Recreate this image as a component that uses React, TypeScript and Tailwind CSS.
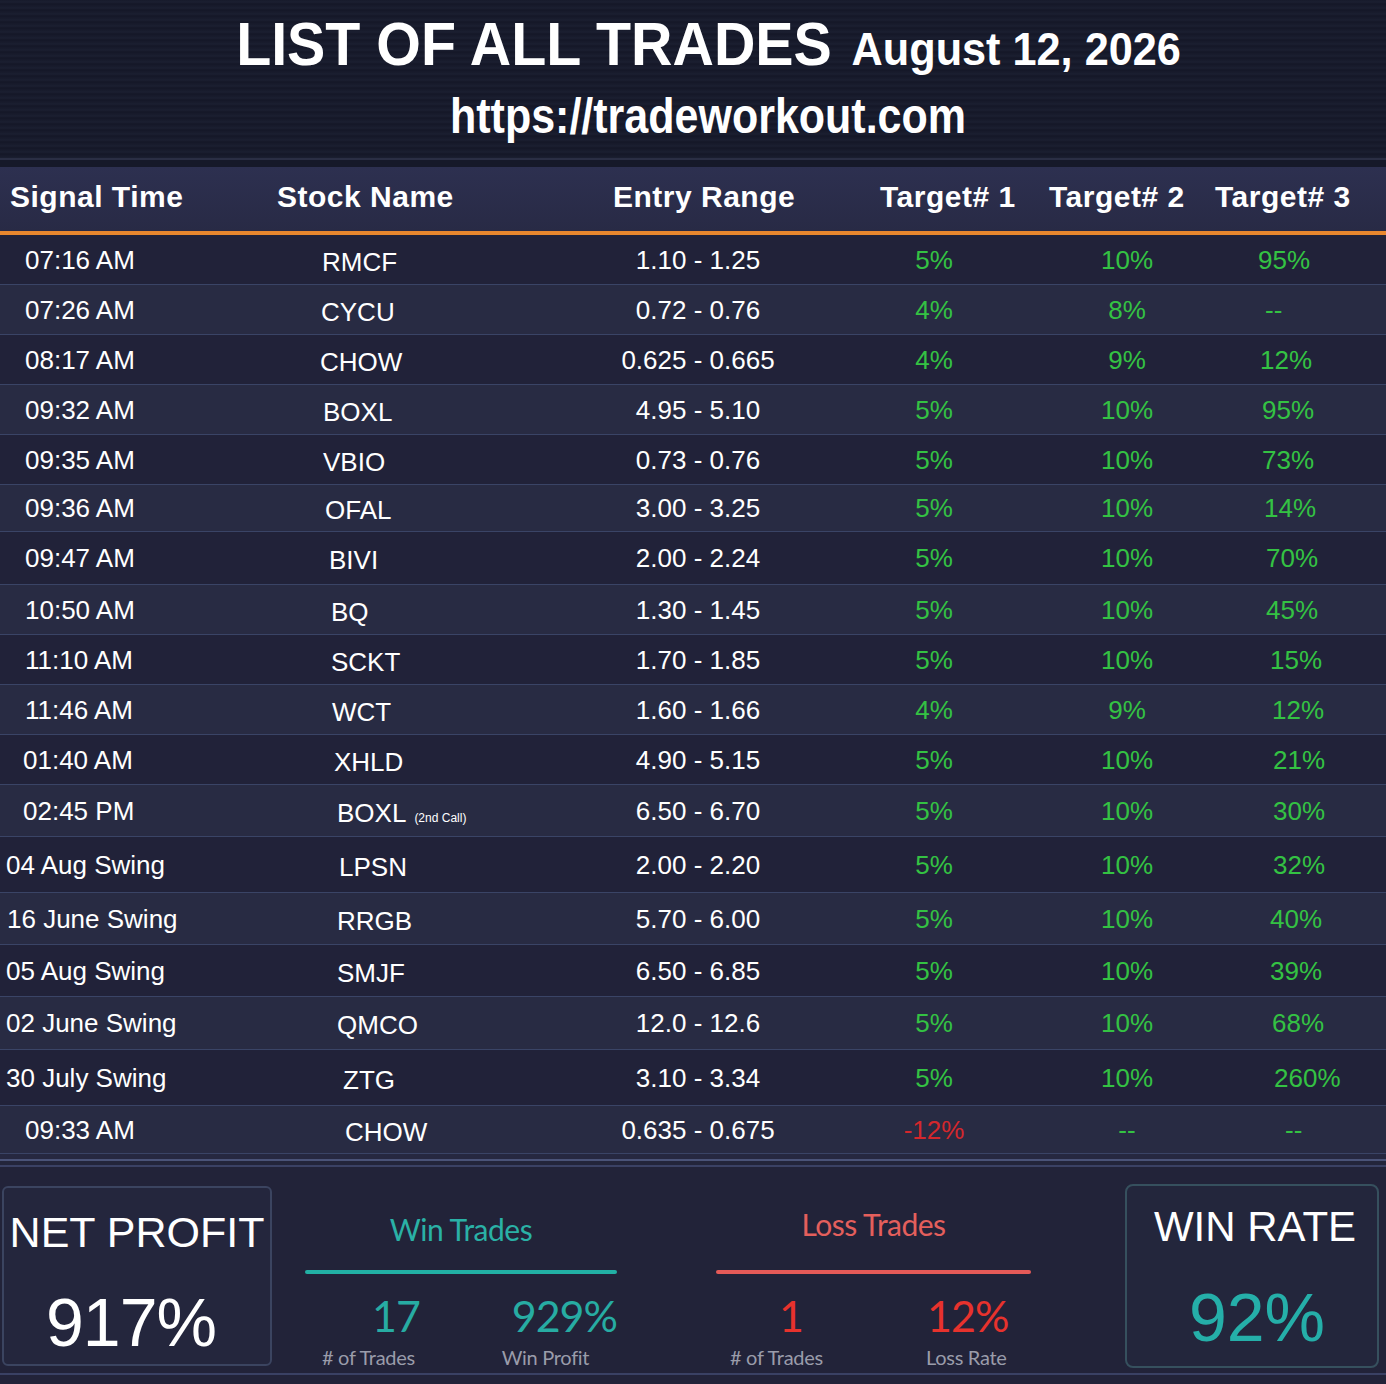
import React from 'react';

// one row of the trade list
interface Trade {
  time: string;
  name: string;
  note?: string;
  entry: string;
  t1: string;
  t2: string;
  t3: string;
  h: string;
  timePad: string;
  namePad: string;
  t3Pad: string;
}

const trades: Trade[] = [
  { time: '07:16 AM', name: 'RMCF', entry: '1.10 - 1.25', t1: '5%', t2: '10%', t3: '95%', h: 'h-[50px]', timePad: 'pl-[25px]', namePad: 'pl-[22px]', t3Pad: 'pl-[76px]' },
  { time: '07:26 AM', name: 'CYCU', entry: '0.72 - 0.76', t1: '4%', t2: '8%', t3: '--', h: 'h-[50px]', timePad: 'pl-[25px]', namePad: 'pl-[21px]', t3Pad: 'pl-[83px]' },
  { time: '08:17 AM', name: 'CHOW', entry: '0.625 - 0.665', t1: '4%', t2: '9%', t3: '12%', h: 'h-[50px]', timePad: 'pl-[25px]', namePad: 'pl-[20px]', t3Pad: 'pl-[78px]' },
  { time: '09:32 AM', name: 'BOXL', entry: '4.95 - 5.10', t1: '5%', t2: '10%', t3: '95%', h: 'h-[50px]', timePad: 'pl-[25px]', namePad: 'pl-[23px]', t3Pad: 'pl-[80px]' },
  { time: '09:35 AM', name: 'VBIO', entry: '0.73 - 0.76', t1: '5%', t2: '10%', t3: '73%', h: 'h-[50px]', timePad: 'pl-[25px]', namePad: 'pl-[23px]', t3Pad: 'pl-[80px]' },
  { time: '09:36 AM', name: 'OFAL', entry: '3.00 - 3.25', t1: '5%', t2: '10%', t3: '14%', h: 'h-[47px]', timePad: 'pl-[25px]', namePad: 'pl-[25px]', t3Pad: 'pl-[82px]' },
  { time: '09:47 AM', name: 'BIVI', entry: '2.00 - 2.24', t1: '5%', t2: '10%', t3: '70%', h: 'h-[53px]', timePad: 'pl-[25px]', namePad: 'pl-[29px]', t3Pad: 'pl-[84px]' },
  { time: '10:50 AM', name: 'BQ', entry: '1.30 - 1.45', t1: '5%', t2: '10%', t3: '45%', h: 'h-[50px]', timePad: 'pl-[25px]', namePad: 'pl-[31px]', t3Pad: 'pl-[84px]' },
  { time: '11:10 AM', name: 'SCKT', entry: '1.70 - 1.85', t1: '5%', t2: '10%', t3: '15%', h: 'h-[50px]', timePad: 'pl-[25px]', namePad: 'pl-[31px]', t3Pad: 'pl-[88px]' },
  { time: '11:46 AM', name: 'WCT', entry: '1.60 - 1.66', t1: '4%', t2: '9%', t3: '12%', h: 'h-[50px]', timePad: 'pl-[25px]', namePad: 'pl-[32px]', t3Pad: 'pl-[90px]' },
  { time: '01:40 AM', name: 'XHLD', entry: '4.90 - 5.15', t1: '5%', t2: '10%', t3: '21%', h: 'h-[50px]', timePad: 'pl-[23px]', namePad: 'pl-[34px]', t3Pad: 'pl-[91px]' },
  { time: '02:45 PM', name: 'BOXL', note: '(2nd Call)', entry: '6.50 - 6.70', t1: '5%', t2: '10%', t3: '30%', h: 'h-[52px]', timePad: 'pl-[23px]', namePad: 'pl-[37px]', t3Pad: 'pl-[91px]' },
  { time: '04 Aug Swing', name: 'LPSN', entry: '2.00 - 2.20', t1: '5%', t2: '10%', t3: '32%', h: 'h-[56px]', timePad: 'pl-[6px]', namePad: 'pl-[39px]', t3Pad: 'pl-[91px]' },
  { time: '16 June Swing', name: 'RRGB', entry: '5.70 - 6.00', t1: '5%', t2: '10%', t3: '40%', h: 'h-[52px]', timePad: 'pl-[7px]', namePad: 'pl-[37px]', t3Pad: 'pl-[88px]' },
  { time: '05 Aug Swing', name: 'SMJF', entry: '6.50 - 6.85', t1: '5%', t2: '10%', t3: '39%', h: 'h-[52px]', timePad: 'pl-[6px]', namePad: 'pl-[37px]', t3Pad: 'pl-[88px]' },
  { time: '02 June Swing', name: 'QMCO', entry: '12.0 - 12.6', t1: '5%', t2: '10%', t3: '68%', h: 'h-[53px]', timePad: 'pl-[6px]', namePad: 'pl-[37px]', t3Pad: 'pl-[90px]' },
  { time: '30 July Swing', name: 'ZTG', entry: '3.10 - 3.34', t1: '5%', t2: '10%', t3: '260%', h: 'h-[56px]', timePad: 'pl-[6px]', namePad: 'pl-[43px]', t3Pad: 'pl-[92px]' },
  { time: '09:33 AM', name: 'CHOW', entry: '0.635 - 0.675', t1: '-12%', t2: '--', t3: '--', h: 'h-[48px]', timePad: 'pl-[25px]', namePad: 'pl-[45px]', t3Pad: 'pl-[103px]' },
];

function TradeRow({ trade, index }: { trade: Trade; index: number }) {
  const bg = index % 2 === 0 ? 'bg-[#212239]' : 'bg-[#282b43]';
  const t1Color = trade.t1.startsWith('-') ? 'text-[#d4272c]' : 'text-[#34c243]';
  return (
    <div className={`flex items-center border-b border-[#3a4466] ${bg} ${trade.h}`}>
      <div className={`w-[300px] ${trade.timePad}`}>{trade.time}</div>
      <div className={`w-[300px] pt-[4px] ${trade.namePad}`}>
        {trade.name}
        {trade.note && <span className="ml-[8px] text-[12px]">{trade.note}</span>}
      </div>
      <div className="w-[196px] text-center">{trade.entry}</div>
      <div className={`w-[276px] text-center ${t1Color}`}>{trade.t1}</div>
      <div className="w-[110px] text-center text-[#34c243]">{trade.t2}</div>
      <div className={`flex-1 text-[#34c243] ${trade.t3Pad}`}>{trade.t3}</div>
    </div>
  );
}

function StatGroup({
  title,
  titleColor,
  lineColor,
  numColor,
  titleTop,
  lineTop,
  count,
  amount,
  label,
  pads,
}: {
  title: string;
  titleColor: string;
  lineColor: string;
  numColor: string;
  titleTop: string;
  lineTop: string;
  count: string;
  amount: string;
  label: string;
  pads: [string, string, string, string];
}) {
  return (
    <div className="flex flex-col font-['Lato',sans-serif]">
      <div className={`text-center text-[30px] leading-none tracking-[-0.5px] ${titleColor} ${titleTop}`}>{title}</div>
      <div className={`h-[4px] rounded-full ${lineColor} ${lineTop}`} />
      <div className="mt-[20px] flex">
        <div className="flex w-[180px] flex-col">
          <span className={`text-[43px] leading-none tracking-[-1px] ${numColor} ${pads[0]}`}>{count}</span>
          <span className={`mt-[10px] text-[20px] leading-none tracking-[-0.3px] text-[#9a9caa] ${pads[1]}`}># of Trades</span>
        </div>
        <div className="flex flex-col">
          <span className={`text-[43px] leading-none tracking-[-1px] ${numColor} ${pads[2]}`}>{amount}</span>
          <span className={`mt-[10px] text-[20px] leading-none tracking-[-0.3px] text-[#9a9caa] ${pads[3]}`}>{label}</span>
        </div>
      </div>
    </div>
  );
}

export default function App() {
  return (
    <div className="w-[1386px] h-[1384px] overflow-hidden bg-[#222339] font-['Liberation_Sans',Arial,sans-serif] text-white">
      {/* title block */}
      <div className="h-[158px] bg-[repeating-linear-gradient(180deg,#171a2b_0px,#1b1f31_2px,#141727_4px,#181b2c_6px)] pl-[30px] flex flex-col items-center">
        <div className="mt-[14px] flex items-baseline gap-[21px] font-bold leading-none scale-x-[0.94] whitespace-nowrap">
          <span className="text-[61px]">LIST OF ALL TRADES</span>
          <span className="text-[46px]">August 12, 2026</span>
        </div>
        <div className="mt-[16px] text-[50px] font-bold leading-none scale-x-[0.86] whitespace-nowrap">
          https://tradeworkout.com
        </div>
      </div>
      <div className="h-[2px] bg-[#2a2e44]" />
      <div className="h-[7px] bg-[#161929]" />

      {/* column headers */}
      <div className="flex h-[64px] items-center pb-[6px] bg-[linear-gradient(180deg,#2d3050,#282a45)] text-[30px] font-bold tracking-[0.5px]">
        <div className="w-[277px] pl-[10px]">Signal Time</div>
        <div className="w-[336px]">Stock Name</div>
        <div className="w-[267px]">Entry Range</div>
        <div className="w-[169px]">Target# 1</div>
        <div className="w-[166px]">Target# 2</div>
        <div>Target# 3</div>
      </div>
      <div className="h-[4px] bg-[#e8872e]" />

      {/* rows */}
      <div className="text-[26px] leading-none">
        {trades.map((t, i) => (
          <TradeRow key={t.time + t.name} trade={t} index={i} />
        ))}
      </div>

      {/* summary */}
      <div className="h-[5px] bg-[#262840]" />
      <div className="h-[2px] bg-[#4a5378]" />
      <div className="h-[4px] bg-[#23253b]" />
      <div className="h-[2px] bg-[#3a4164]" />
      <div className="flex h-[206px] items-start pl-[2px]">
        <div className="mt-[19px] flex h-[180px] w-[270px] flex-col items-center rounded-[6px] border-2 border-[#3b4460] bg-[#24263d]">
          <div className="mt-[23px] text-[43px] leading-none">NET PROFIT</div>
          <div className="mt-[34px] pr-[12px] text-[68px] leading-none tracking-[-1px]">917%</div>
        </div>

        <div className="ml-[33px] w-[312px]">
          <StatGroup
            title="Win Trades"
            titleColor="text-[#2ab1a6]"
            lineColor="bg-[#22b0a5]"
            numColor="text-[#27aca3]"
            titleTop="mt-[47px]"
            lineTop="mt-[26px]"
            count="17"
            amount="929%"
            label="Win Profit"
            pads={['pl-[67px]', 'pl-[17px]', 'pl-[37px]', 'pl-[27px]']}
          />
        </div>

        <div className="ml-[99px] w-[315px]">
          <StatGroup
            title="Loss Trades"
            titleColor="text-[#e45f5c]"
            lineColor="bg-[#e55a58]"
            numColor="text-[#e7322d]"
            titleTop="mt-[42px]"
            lineTop="mt-[31px]"
            count="1"
            amount="12%"
            label="Loss Rate"
            pads={['pl-[63px]', 'pl-[14px]', 'pl-[31px]', 'pl-[30px]']}
          />
        </div>

        <div className="ml-[94px] mt-[17px] flex h-[184px] w-[254px] flex-col items-center rounded-[8px] border-2 border-[#36505e] bg-[#23263c]">
          <div className="mt-[20px] pl-[6px] text-[42px] leading-none">WIN RATE</div>
          <div className="mt-[35px] pl-[10px] text-[68px] leading-none text-[#25afa9]">92%</div>
        </div>
      </div>
      <div className="h-[2px] bg-[#3a4164]" />
    </div>
  );
}
